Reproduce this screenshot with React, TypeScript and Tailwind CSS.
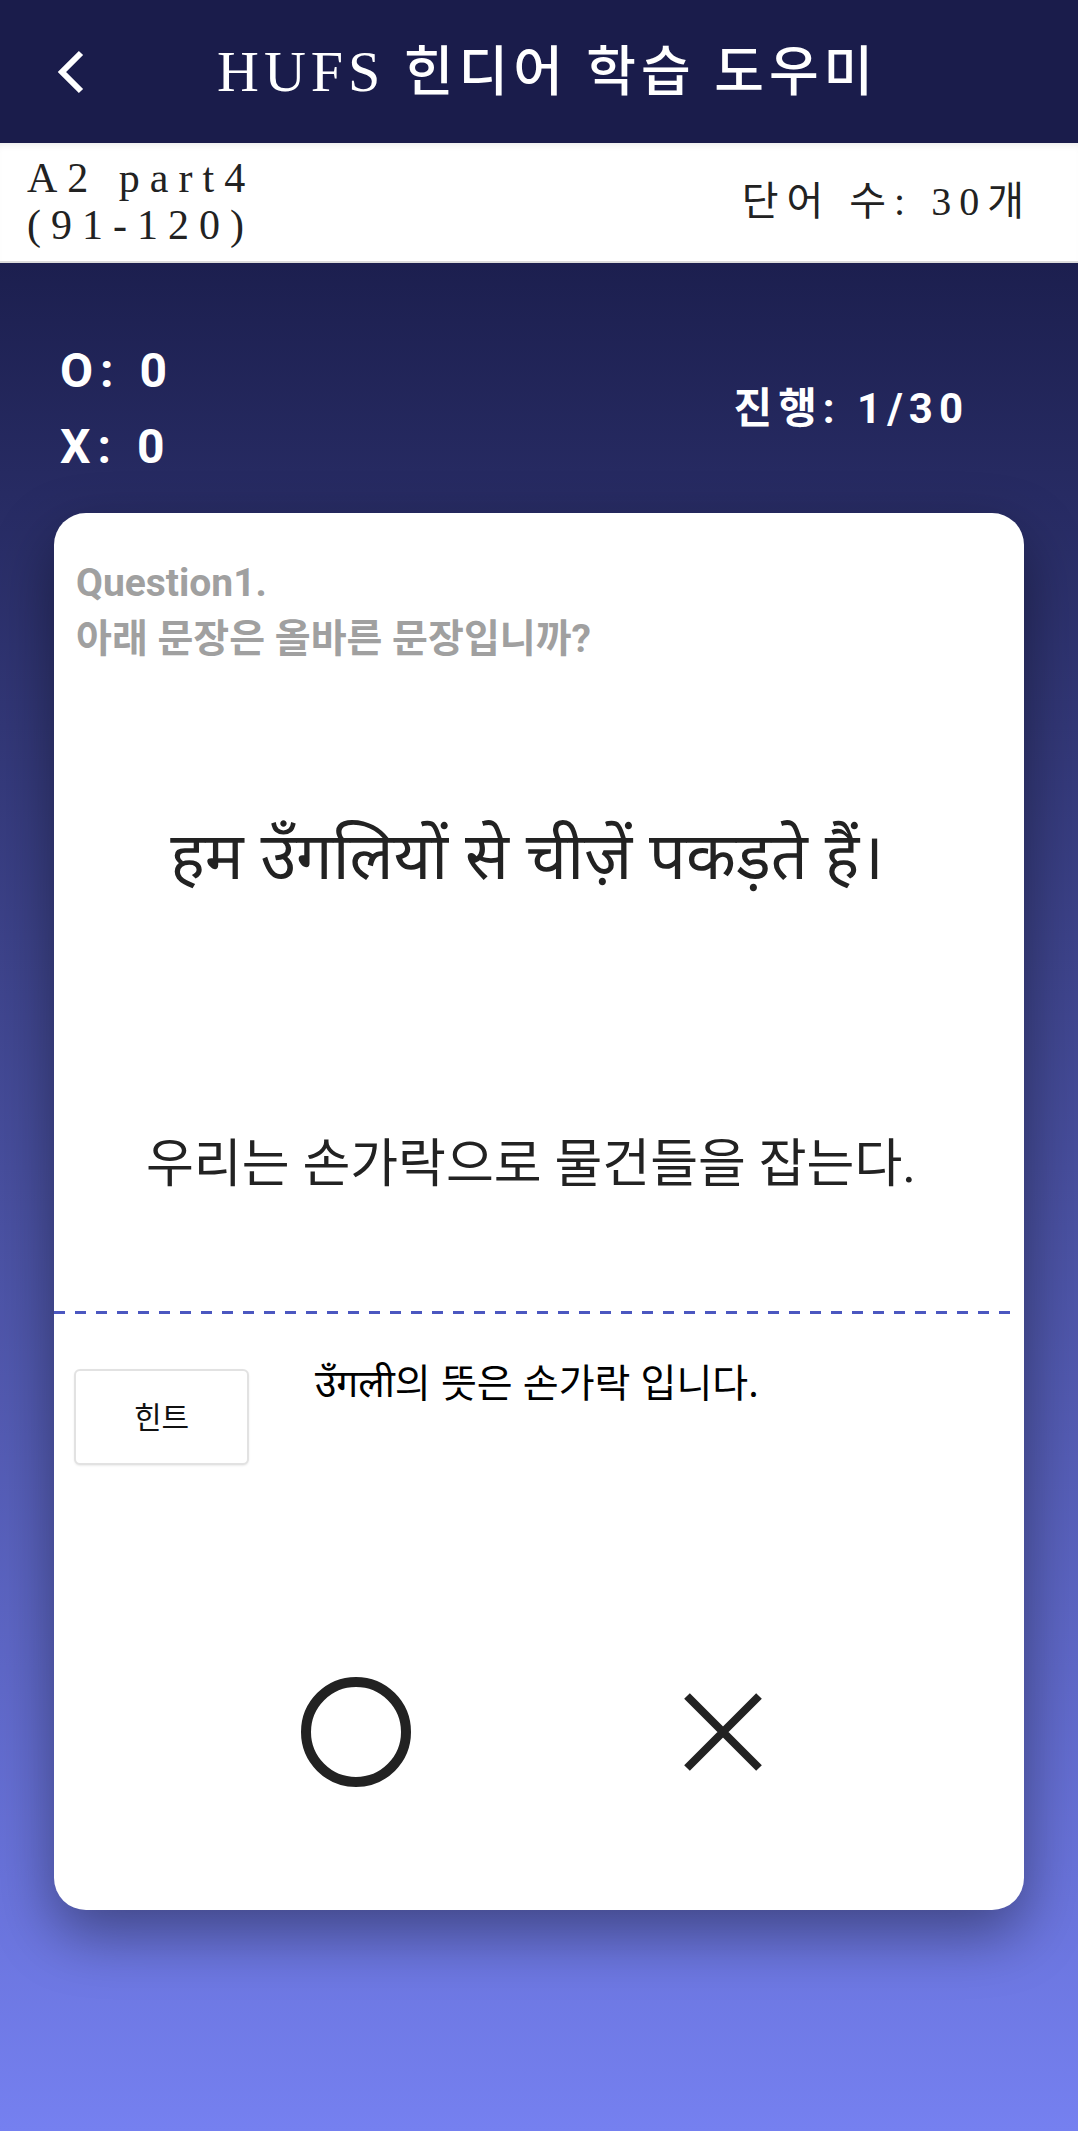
import React from "react";

const serifKo = { fontFamily: '"Liberation Serif", "Noto Sans CJK KR", serif' };

function BackIcon() {
  return (
    <svg width="30" height="44" viewBox="0 0 30 44" fill="none">
      <polyline points="25,3 6,22 25,41" stroke="white" strokeWidth="6" strokeLinejoin="miter" />
    </svg>
  );
}

function CircleMark() {
  return (
    <svg width="112" height="112" viewBox="0 0 112 112">
      <ellipse cx="56" cy="56" rx="50" ry="50" fill="none" stroke="#222" strokeWidth="10" />
    </svg>
  );
}

function CrossMark() {
  return (
    <svg width="80" height="80" viewBox="0 0 80 80">
      <path d="M4 4 L76 76 M76 4 L4 76" stroke="#222" strokeWidth="8" />
    </svg>
  );
}

export default function App() {
  return (
    <div className="flex min-h-[2131px] flex-col font-['Roboto','Noto_Sans_CJK_KR',sans-serif]">
      {/* top bar */}
      <header className="flex h-[143px] items-center bg-[#1a1c4b] text-white">
        <div className="ml-[56px] flex w-[30px] items-center">
          <BackIcon />
        </div>
        <h1
          className="ml-[131px] text-[54px] font-medium leading-none tracking-[5px] text-white"
          style={serifKo}
        >
          <span className="text-[58px]">HUFS</span> 힌디어 학습 도우미
        </h1>
      </header>

      {/* lesson info */}
      <div className="flex h-[120px] items-center justify-between border-b-2 border-[#dcdcdc] bg-white pl-[27px] pr-[46px] shadow-[inset_0_6px_8px_-6px_rgba(0,0,0,0.12)]">
        <div className="text-[42px] leading-[47px] tracking-[10px] text-[#222]" style={serifKo}>
          <div>A2 part4</div>
          <div>(91-120)</div>
        </div>
        <div className="text-[40px] leading-none tracking-[8px] text-[#222]" style={serifKo}>
          단어 수: 30개
        </div>
      </div>

      {/* body */}
      <main className="flex flex-1 flex-col bg-[linear-gradient(180deg,#1c1f4f_0%,#7580f0_100%)] px-[54px] pt-[70px]">
        <div className="flex items-center justify-between pl-[6px] pr-[55px] font-bold text-white">
          <div className="text-[48px] leading-[76px] tracking-[7px]">
            <div>O: 0</div>
            <div>X: 0</div>
          </div>
          <div className="text-[42px] leading-none tracking-[6px]">진행: 1/30</div>
        </div>

        <section className="mt-[28px] flex h-[1397px] flex-col rounded-[32px] bg-white shadow-[0_24px_60px_rgba(0,0,0,0.4)]">
          <div className="px-[22px] pt-[42px] text-[39px] font-bold leading-[56px] text-[#a0a0a0]">
            <div>Question1.</div>
            <div>아래 문장은 올바른 문장입니까?</div>
          </div>

          <div className="flex h-[392px] items-center justify-center pr-[24px]">
            <p className="text-[65px] leading-none text-[#222] font-['Noto_Sans_Devanagari','Noto_Sans','Lohit_Devanagari',sans-serif]">
              हम उँगलियों से चीज़ें पकड़ते हैं।
            </p>
          </div>

          <div className="flex h-[212px] items-center justify-center pr-[16px]">
            <p className="text-[52px] text-[#222]">우리는 손가락으로 물건들을 잡는다.</p>
          </div>

          <div className="mt-[40px] mr-[13px] h-[3px] bg-[repeating-linear-gradient(90deg,#4b57c0_0px,#4b57c0_11px,transparent_11px,transparent_21px)]" />

          <div className="flex items-start pl-[20px] pt-[55px]">
            <button className="flex h-[96px] w-[175px] items-center justify-center rounded-[6px] border-2 border-[#e2e2e2] bg-white text-[30px] text-[#111] shadow-[0_1px_2px_rgba(0,0,0,0.08)]">
              힌트
            </button>
            <p className="ml-[66px] -mt-[10px] text-[39px] text-black font-['Noto_Sans_Devanagari','Noto_Sans_CJK_KR',sans-serif]">
              उँगली의 뜻은 손가락 입니다.
            </p>
          </div>

          <div className="mt-[211px] flex justify-center">
            <div className="flex w-[367px] justify-center">
              <CircleMark />
            </div>
            <div className="flex w-[367px] items-center justify-center">
              <CrossMark />
            </div>
          </div>
        </section>
        <div className="h-[221px]" />
      </main>
    </div>
  );
}
